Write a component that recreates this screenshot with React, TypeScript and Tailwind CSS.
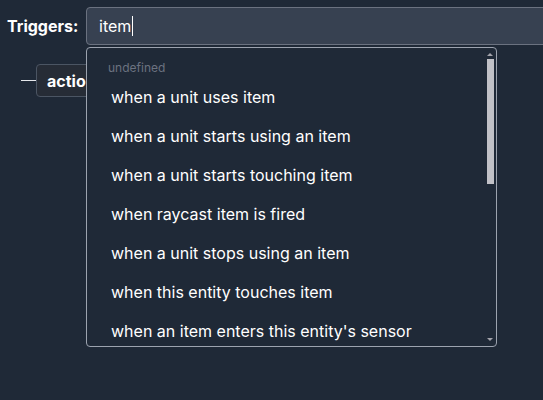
import React from "react";

const items = [
  "when a unit uses item",
  "when a unit starts using an item",
  "when a unit starts touching item",
  "when raycast item is fired",
  "when a unit stops using an item",
  "when this entity touches item",
  "when an item enters this entity's sensor",
];

export default function App() {
  return (
    <div
      className="relative w-[543px] h-[400px] overflow-hidden bg-[#1f2937] text-white"
      style={{ fontFamily: "Inter, 'Noto Sans', sans-serif" }}
    >
      <div className="flex items-center pt-[7px] pl-[7px]">
        <div className="w-[79px] shrink-0 text-[16px] font-bold leading-none">Triggers:</div>
        <div className="relative shrink-0">
          <div className="w-[480px] h-[38px] rounded-[4px] border border-[#6b7280] bg-[#374151] flex items-center pl-[12px] text-[16px]">
            <span>item</span>
            <span className="w-px h-[20px] bg-white ml-[1px]" />
          </div>
          <div className="absolute left-0 top-[40px] w-[411px] h-[300px] rounded-[4px] border border-[#9ca3af] bg-[#1f2937] overflow-hidden">
            <div className="pl-[21px] pt-[12px] pb-[1px] text-[12px] leading-[16px] text-[#6b7280]">undefined</div>
            {items.map((t) => (
              <div key={t} className="pl-[24px] h-[39px] flex items-center text-[16px]">
                {t}
              </div>
            ))}
            <div className="absolute right-[2px] top-0 bottom-0 w-[8px] flex flex-col items-center">
              <div className="mt-[5px] w-0 h-0 border-l-[3px] border-r-[3px] border-b-[3px] border-l-transparent border-r-transparent border-b-[#a3a3ab]" />
              <div className="mt-[3px] w-[7px] h-[125px] bg-[#c1c1c7]" />
              <div className="mt-auto mb-[5px] w-0 h-0 border-l-[3px] border-r-[3px] border-t-[3px] border-l-transparent border-r-transparent border-t-[#a3a3ab]" />
            </div>
          </div>
        </div>
      </div>
      <div className="flex items-center mt-[19px] pl-[21px]">
        <div className="w-[15px] h-px bg-[#e5e7eb]" />
        <div className="h-[33px] px-[10px] flex items-center rounded-[4px] border border-[#4b5563] bg-[#262c36] text-[16px] font-bold">
          action
        </div>
      </div>
    </div>
  );
}
